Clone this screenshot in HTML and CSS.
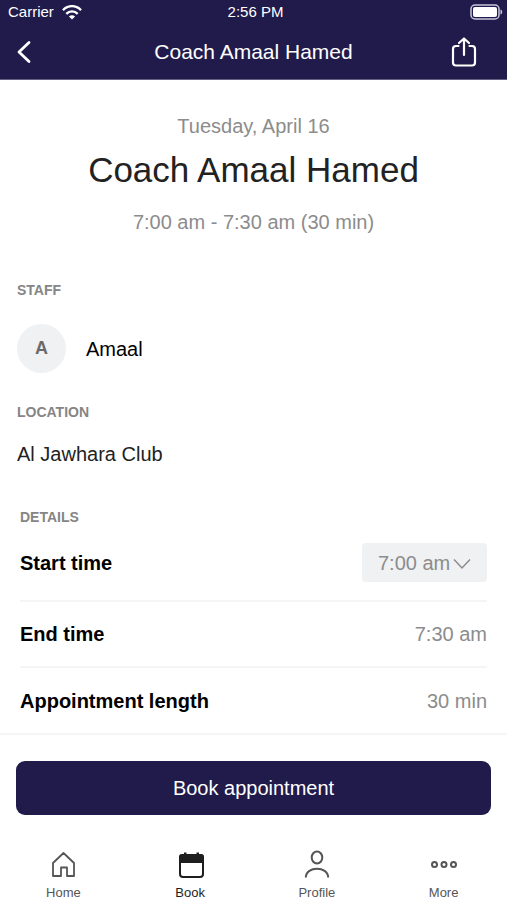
FILE: index.html
```html
<!DOCTYPE html>
<html lang="en">
<head>
<meta charset="utf-8">
<meta name="viewport" content="width=device-width, initial-scale=1">
<title>Coach Amaal Hamed</title>
<link rel="stylesheet" href="styles.css">
</head>
<body>
<header class="topbar">
  <div class="status">
    <span class="carrier">Carrier
      <svg class="wifi" width="20" height="15" viewBox="0 0 20 15" fill="none" stroke="currentColor" stroke-width="2.4" aria-hidden="true"><path d="M1 5.2C6-.2 14-.2 19 5.2"/><path d="M4.3 8.9C7.500 5.500 12.500 5.500 15.700 8.900"/><path d="M10 14.600 6.900 11.500C8.700 9.800 11.300 9.800 13.100 11.500Z" fill="currentColor" stroke="none"/></svg>
    </span>
    <span>2:56 PM</span>
    <svg class="battery" width="33" height="16" viewBox="0 0 33 16" aria-hidden="true"><rect x="1" y="1" width="28" height="14" rx="4" fill="none" stroke="#c9c6dc" stroke-width="1.5"/><rect x="3" y="3" width="24" height="10" rx="2" fill="#fff"/><path d="M30.500 5.500C32.800 6 32.800 10 30.500 10.500Z" fill="#c9c6dc"/></svg>
  </div>
  <div class="navbar">
    <button class="icon-button" type="button" aria-label="Back"><svg width="16" height="24" viewBox="0 0 16 24" fill="none" stroke="currentColor" stroke-width="2.8" stroke-linecap="round" stroke-linejoin="round"><path d="M13 2.500 3 12 13 21.500"/></svg></button>
    <span class="navbar-title">Coach Amaal Hamed</span>
    <button class="icon-button" type="button" aria-label="Share"><svg width="26" height="30" viewBox="0 0 26 30" fill="none" stroke="currentColor" stroke-width="2.2" stroke-linecap="round" stroke-linejoin="round"><path d="M7.500 9H5Q2 9 2 12V25.500Q2 28.500 5 28.500H21Q24 28.500 24 25.500V12Q24 9 21 9H18.500"/><path d="M13 18V1.500M8 6 13 1.500 18 6"/></svg></button>
  </div>
</header>

<main class="content">
  <section class="summary">
    <p class="muted">Tuesday, April 16</p>
    <h1>Coach Amaal Hamed</h1>
    <p class="muted">7:00 am - 7:30 am (30 min)</p>
  </section>
  <section class="staff">
    <h2>STAFF</h2>
    <div class="person"><span class="avatar">A</span><span class="name">Amaal</span></div>
  </section>
  <section class="location">
    <h2>LOCATION</h2>
    <p>Al Jawhara Club</p>
  </section>
  <section class="details">
    <h2>DETAILS</h2>
    <div class="row">
      <label for="start">Start time</label>
      <span class="picker">
        <select id="start"><option>7:00 am</option></select>
        <svg class="chevron" width="18" height="12" viewBox="0 0 18 12" fill="none" stroke="currentColor" stroke-width="1.5" aria-hidden="true"><path d="M1 1.500 9 10 17 1.500"/></svg>
      </span>
    </div>
    <div class="row"><span>End time</span><span class="value">7:30 am</span></div>
    <div class="row"><span>Appointment length</span><span class="value">30 min</span></div>
  </section>
</main>

<footer class="bottom">
  <button class="book" type="button">Book appointment</button>
  <nav class="tabs">
    <a href="#home"><svg width="30" height="30" viewBox="0 0 30 30" fill="none" stroke="currentColor" stroke-width="1.800" stroke-linejoin="round"><path d="M5 13 15.500 3 26 13V26H19V17.500H13V26H5Z"/></svg>Home</a>
    <a href="#book" class="active" aria-current="page"><svg width="30" height="30" viewBox="0 0 30 30"><rect x="5" y="5" width="23" height="22" rx="3" fill="none" stroke="currentColor" stroke-width="2"/><path d="M4 13V7Q4 4 7 4H9V2.500H11.500V4H21.500V2.500H24V4H26Q29 4 29 7V13Z" fill="currentColor"/></svg>Book</a>
    <a href="#profile"><svg width="30" height="30" viewBox="0 0 30 30" fill="none" stroke="currentColor" stroke-width="2"><ellipse cx="15" cy="7.500" rx="5.300" ry="6"/><path d="M3.800 27.500C4 15.800 26 15.800 26.200 27.500"/></svg>Profile</a>
    <a href="#more"><svg width="30" height="30" viewBox="0 0 30 30" fill="none" stroke="currentColor" stroke-width="2"><circle cx="5.500" cy="14.500" r="2.500"/><circle cx="15" cy="14.500" r="2.500"/><circle cx="24.500" cy="14.500" r="2.500"/></svg>More</a>
  </nav>
</footer>
</body>
</html>
```
FILE: styles.css
```css
* { box-sizing: border-box; }
body {
  margin: 0;
  min-height: 100vh;
  display: flex;
  flex-direction: column;
  background: #fff;
  color: #000;
  font: 20px/24px "Liberation Sans", Arial, sans-serif;
}
h1, h2, p { margin: 0; }
button, select { font: inherit; border: 0; }
svg { display: block; }

.topbar { background: #211b4b; color: #fff; border-bottom: 1px solid #635f80; }
.status {
  display: grid;
  grid-template-columns: 1fr auto 1fr;
  align-items: center;
  height: 24px;
  padding: 0 4px 0 8px;
  font-size: 15px;
}
.carrier { display: flex; align-items: center; gap: 8px; }
.battery { justify-self: end; }
.navbar {
  display: grid;
  grid-template-columns: 56px 1fr 56px;
  align-items: center;
  height: 55px;
  padding: 0 16px;
}
.navbar-title { text-align: center; font-size: 21px; }
.icon-button { padding: 0; background: none; color: inherit; }
.icon-button:last-child { justify-self: end; padding-right: 14px; }

.content { flex: 1; }
.summary { padding: 34px 16px 0; text-align: center; }
.muted { color: #8c8c8c; }
h1 { margin: 12px 0 20px; font-size: 35px; line-height: 40px; font-weight: 400; color: #222; }
h2 { font-size: 14px; line-height: 16px; font-weight: 700; color: #858585; }
.staff, .location { padding: 0 17px; }
.staff { margin-top: 48px; }
.person { display: flex; align-items: center; gap: 20px; margin-top: 26px; }
.avatar {
  width: 49px;
  height: 49px;
  border-radius: 50%;
  background: #f0f1f3;
  color: #6b6b6b;
  font-weight: 700;
  font-size: 18px;
  line-height: 49px;
  text-align: center;
}
.location { margin-top: 31px; }
.location p { margin-top: 22px; color: #222; }
.details { padding: 0 20px; margin-top: 43px; }
.row {
  display: flex;
  justify-content: space-between;
  align-items: center;
  height: 66px;
  border-bottom: 2px solid #f5f5f5;
  font-weight: 700;
}
h2 + .row { height: 77px; }
.row:last-child { height: 65px; border: 0; }
.value { font-weight: 400; color: #8c8c8c; }
.picker { position: relative; font-weight: 400; color: #8c8c8c; }
.picker select {
  appearance: none;
  display: block;
  width: 125px;
  height: 39px;
  padding: 0 16px;
  border-radius: 4px;
  background: #f0f1f3;
  color: inherit;
}
.chevron { position: absolute; right: 16px; top: 15px; pointer-events: none; }

.bottom { border-top: 2px solid #f5f5f5; padding: 26px 0 0; }
.book {
  display: block;
  width: calc(100% - 32px);
  height: 54px;
  margin: 0 16px;
  border-radius: 9px;
  background: #211b4b;
  color: #fff;
}
.tabs { display: grid; grid-template-columns: repeat(4, 1fr); padding: 35px 0 0; }
.tabs a {
  display: flex;
  flex-direction: column;
  align-items: center;
  gap: 4px;
  height: 52px;
  color: #555;
  text-decoration: none;
  font-size: 13px;
  line-height: 18px;
}
.tabs .active { color: #1e1e1e; }
```
